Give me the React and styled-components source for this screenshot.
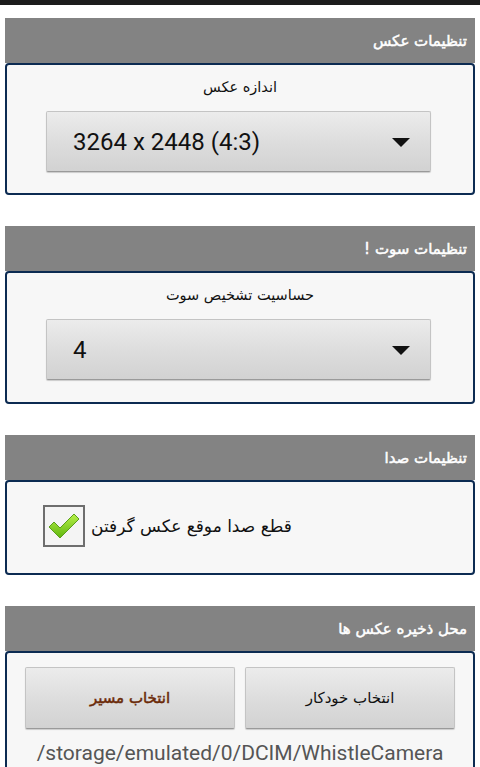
import React from 'react';
import styled, { createGlobalStyle } from 'styled-components';

const GlobalStyle = createGlobalStyle`
  html, body {
    margin: 0;
    padding: 0;
    background: #ffffff;
    font-family: "DejaVu Sans", Roboto, sans-serif;
  }
`;

// 화면 상단 상태바 자리
const TopBar = styled.div`
  height: 5px;
  background: #1c1c1c;
`;

const Page = styled.div`
  padding: 13px 5px 0;
  display: flex;
  flex-direction: column;
  gap: 31px;
`;

const Section = styled.section`
  display: flex;
  flex-direction: column;
`;

/* 회색 섹션 제목 - 가짜 볼드 */
const SectionHeader = styled.div`
  height: 45px;
  background: #838383;
  color: #ffffff;
  font-size: 15px;
  -webkit-text-stroke: 0.5px #ffffff;
  direction: rtl;
  display: flex;
  align-items: center;
  padding-right: 8px;
  box-sizing: border-box;
`;

const Card = styled.div`
  border: 2px solid #0c2b52;
  border-radius: 4px;
  background: #f7f7f7;
  height: ${(p) => p.$height}px;
  box-sizing: border-box;
  display: flex;
  flex-direction: column;
`;

const Label = styled.div`
  direction: rtl;
  text-align: center;
  font-size: 14.5px;
  color: #111;
  height: 20px;
  line-height: 20px;
  margin-top: 12px;
`;

const Spinner = styled.div`
  margin: 14px 0 0 39px;
  width: 385px;
  height: 61px;
  box-sizing: border-box;
  border: 1px solid #c4c4c4;
  border-bottom-color: #9a9a9a;
  border-radius: 2px;
  background: linear-gradient(180deg, #ececec 0%, #dcdcdc 55%, #d2d2d2 100%);
  box-shadow: 0 1px 1px rgba(0, 0, 0, 0.18);
  display: flex;
  align-items: center;
  justify-content: space-between;
  padding: 0 20px 0 26px;
  font-family: Roboto, "DejaVu Sans", sans-serif;
  font-size: 24px;
  color: #111;
`;

const Arrow = styled.span`
  width: 0;
  height: 0;
  border-left: 9px solid transparent;
  border-right: 9px solid transparent;
  border-top: 9px solid #111;
  margin-top: 2px;
`;

const CheckRow = styled.div`
  display: flex;
  align-items: center;
  gap: 6px;
  margin: 23px 0 0 36px;
`;

const CheckBox = styled.div`
  width: 42px;
  height: 42px;
  box-sizing: border-box;
  border: 2px solid #6e6e6e;
  background: #f4f4f4;
  display: flex;
  align-items: center;
  justify-content: center;
`;

const CheckText = styled.span`
  font-size: 17px;
  color: #111;
  direction: rtl;
`;

const ButtonRow = styled.div`
  display: flex;
  gap: 10px;
  margin: 14px 18px 0;
`;

const Button = styled.div`
  flex: 1;
  height: 62px;
  box-sizing: border-box;
  border: 1px solid #c4c4c4;
  border-bottom-color: #9a9a9a;
  border-radius: 2px;
  background: linear-gradient(180deg, #ececec 0%, #dcdcdc 55%, #d2d2d2 100%);
  box-shadow: 0 1px 1px rgba(0, 0, 0, 0.18);
  display: flex;
  align-items: center;
  justify-content: center;
  direction: rtl;
  font-size: 15px;
  color: ${(p) => (p.$bold ? '#6b2a08' : '#111')};
  -webkit-text-stroke: ${(p) => (p.$bold ? '0.5px #6b2a08' : '0')};
`;

const PathText = styled.div`
  text-align: center;
  font-family: Roboto, "DejaVu Sans", sans-serif;
  font-size: 21px;
  color: #555555;
  margin-top: 12px;
`;

const CheckIcon = () => (
  <svg width="34" height="28" viewBox="0 0 34 28">
    <defs>
      <linearGradient id="chk" x1="0" y1="0" x2="0" y2="1">
        <stop offset="0%" stopColor="#b8f04a" />
        <stop offset="100%" stopColor="#5fb60e" />
      </linearGradient>
    </defs>
    <path
      d="M2 15 L7 10 L13 16 L27 2 L32 7 L13 26 Z"
      fill="url(#chk)"
      stroke="#5a9e1a"
      strokeWidth="1"
      strokeLinejoin="round"
    />
  </svg>
);

const App = () => {
  return (
    <>
      <GlobalStyle />
      <TopBar />
      <Page>
        <Section>
          <SectionHeader>تنظیمات عکس</SectionHeader>
          <Card $height={132}>
            <Label>اندازه عکس</Label>
            <Spinner>
              <span>3264 x 2448 (4:3)</span>
              <Arrow />
            </Spinner>
          </Card>
        </Section>

        <Section>
          <SectionHeader>تنظیمات سوت !</SectionHeader>
          <Card $height={133}>
            <Label>حساسیت تشخیص سوت</Label>
            <Spinner>
              <span>4</span>
              <Arrow />
            </Spinner>
          </Card>
        </Section>

        <Section>
          <SectionHeader>تنظیمات صدا</SectionHeader>
          <Card $height={95}>
            <CheckRow>
              <CheckBox>
                <CheckIcon />
              </CheckBox>
              <CheckText>قطع صدا موقع عکس گرفتن</CheckText>
            </CheckRow>
          </Card>
        </Section>

        <Section>
          <SectionHeader>محل ذخیره عکس ها</SectionHeader>
          <Card $height={140}>
            <ButtonRow>
              <Button $bold>انتخاب مسیر</Button>
              <Button>انتخاب خودکار</Button>
            </ButtonRow>
            <PathText>/storage/emulated/0/DCIM/WhistleCamera</PathText>
          </Card>
        </Section>
      </Page>
    </>
  );
};

export default App;
